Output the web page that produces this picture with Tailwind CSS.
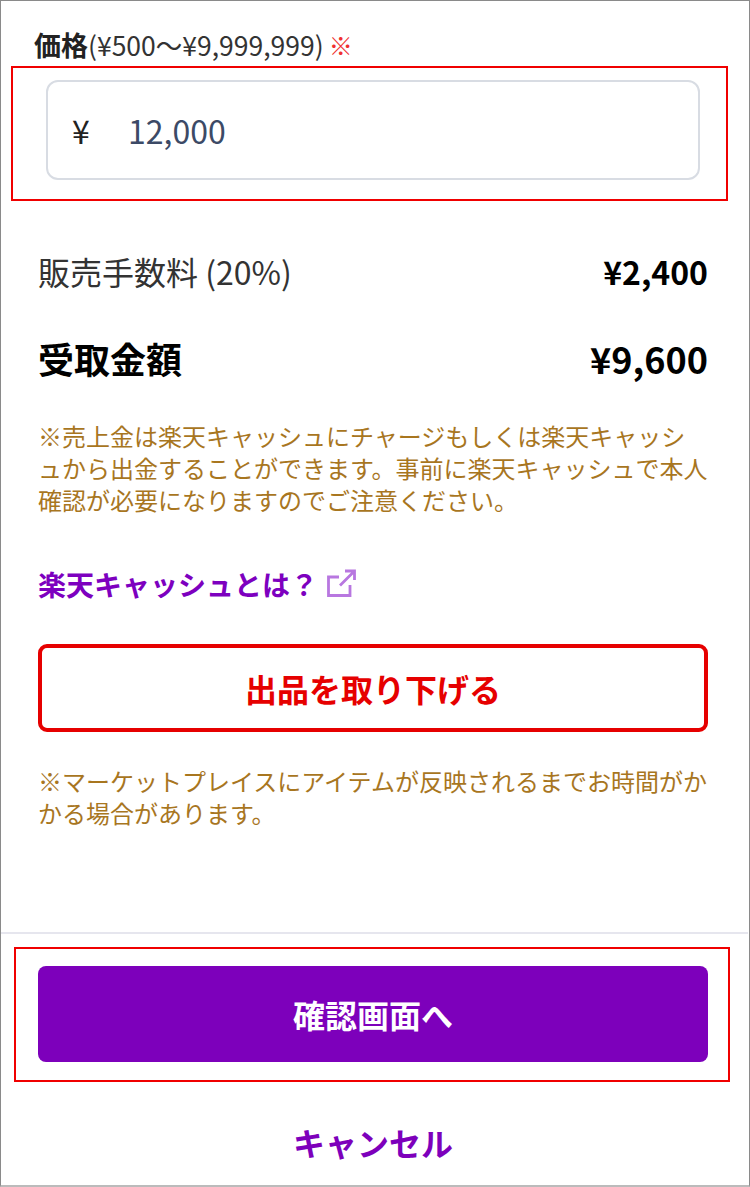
<!DOCTYPE html>
<html lang="ja"><head><meta charset="utf-8"><script src="https://cdn.jsdelivr.net/npm/@tailwindcss/browser@4"></script></head>
<body class="bg-white">
<div class="w-[750px] h-[1187px] overflow-hidden border-l border-r border-t border-b-2 border-l-[#8a8a8a] border-r-[#8a8a8a] border-t-[#8a8a8a] border-b-[#bbbbbb] font-['Noto_Sans_CJK_JP','Noto_Sans',sans-serif] text-[#222] flex flex-col">
  <div class="h-[65px] shrink-0 pl-[33px] pt-[23px] flex items-center leading-[36px] whitespace-nowrap text-[#333]">
    <span class="text-[27px] font-bold text-[#222]">価格</span><span class="text-[26.500px]">(¥500〜¥9,999,999)</span><span class="text-[#f03030] text-[24px] ml-[5px]">※</span>
  </div>
  <div class="ml-[10px] w-[717px] h-[135px] shrink-0 border-2 border-[#f00000] pl-[33px] pt-[12px]">
    <div class="w-[654px] h-[100px] rounded-[12px] border-2 border-[#d8dce3] flex items-center pl-[24px] text-[32px]">
      <span class="w-[56px]">¥</span><span class="text-[#3c4a66]">12,000</span>
    </div>
  </div>
  <div class="ml-[37px] w-[670px] mt-[42px] flex justify-between items-center h-[56px] shrink-0">
    <span class="text-[32px] text-[#333]">販売手数料 (20%)</span><span class="text-[32px] font-bold text-black">¥2,400</span>
  </div>
  <div class="ml-[37px] w-[670px] mt-[31px] flex justify-between items-center h-[56px] shrink-0 font-bold text-black">
    <span class="text-[36px]">受取金額</span><span class="text-[36px]">¥9,600</span>
  </div>
  <p class="ml-[37px] w-[690px] mt-[34px] text-[24px] leading-[32px] text-[#a8761f] shrink-0">※売上金は楽天キャッシュにチャージもしくは楽天キャッシ<br>ュから出金することができます。事前に楽天キャッシュで本人<br>確認が必要になりますのでご注意ください。</p>
  <div class="ml-[37px] w-[670px] mt-[48px] flex items-center gap-[9px] text-[28px] font-bold text-[#7d00bf] h-[40px] shrink-0">
    <span>楽天キャッシュとは？</span>
    <svg width="30" height="30" viewBox="0 0 30 30" fill="none" stroke="#b877e0" stroke-width="2.800"><path d="M12 8H1.500V26.500H23V16"/><path d="M18 2H27.500V11M27 2.500 13 16.500" /></svg>
  </div>
  <div class="ml-[37px] w-[670px] mt-[40px] h-[88px] shrink-0 rounded-[9px] border-4 border-[#e60000] flex items-center justify-center text-[32px] font-bold text-[#e60000]">出品を取り下げる</div>
  <p class="ml-[37px] w-[690px] mt-[33px] text-[24px] leading-[32px] text-[#a8761f] shrink-0">※マーケットプレイスにアイテムが反映されるまでお時間がか<br>かる場合があります。</p>
  <div class="mt-[103px] h-[2px] shrink-0 mr-[1px] bg-[#e6e6ee]"></div>
  <div class="ml-[13px] w-[716px] mt-[13px] h-[135px] shrink-0 border-2 border-[#f00000] pl-[22px] pt-[17px]">
    <div class="w-[670px] h-[96px] rounded-[8px] bg-[#7d00bb] flex items-center justify-center text-white text-[32px] font-bold">確認画面へ</div>
  </div>
  <div class="ml-[37px] w-[670px] mt-[37px] text-center text-[32px] font-bold text-[#7d00bb] leading-[46px] shrink-0">キャンセル</div>
</div>
</body></html>
